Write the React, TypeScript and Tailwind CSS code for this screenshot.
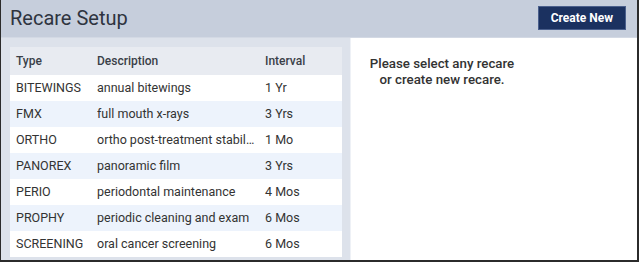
import React from 'react';

const RECARES = [
  { type: 'BITEWINGS', description: 'annual bitewings', interval: '1 Yr' },
  { type: 'FMX', description: 'full mouth x-rays', interval: '3 Yrs' },
  { type: 'ORTHO', description: 'ortho post-treatment stabilization', interval: '1 Mo' },
  { type: 'PANOREX', description: 'panoramic film', interval: '3 Yrs' },
  { type: 'PERIO', description: 'periodontal maintenance', interval: '4 Mos' },
  { type: 'PROPHY', description: 'periodic cleaning and exam', interval: '6 Mos' },
  { type: 'SCREENING', description: 'oral cancer screening', interval: '6 Mos' },
];

export default function App() {
  return (
    <div className="w-[639px] h-[262px] bg-[#2b2b2b] pl-px pr-[2px] pb-[2px] font-['Roboto',sans-serif] text-[#333]">
      <div className="flex flex-col h-full bg-white overflow-hidden">
        {/* Header */}
        <div className="flex items-center justify-between h-[38px] bg-[#c6cedc] border-b border-[#d3d9e4] pl-[9px] pr-[11px]">
          <h1 className="text-[20px] leading-none text-[#2e3440] font-normal pb-[2px]">Recare Setup</h1>
          <button className="h-[24px] px-[12px] bg-[#1b3160] border border-[#4a5f8c] text-white text-[12px] font-bold mb-[2px]">
            Create New
          </button>
        </div>

        <div className="flex flex-1 min-h-0">
          {/* List */}
          <div className="w-[350px] bg-[#dde2eb] pl-[9px] pt-[9px] pr-[9px] border-r border-[#eef1f6]">
            <table className="w-[332px] table-fixed border-collapse text-[12.5px]">
              <thead>
                <tr className="h-[28px] bg-[#e8ebf1] text-left">
                  <th className="w-[81px] pl-[6px] font-medium text-[12px] text-[#3a3f48]">Type</th>
                  <th className="w-[168px] pl-[6px] font-medium text-[12px] text-[#3a3f48]">Description</th>
                  <th className="pl-[6px] font-medium text-[12px] text-[#3a3f48]">Interval</th>
                </tr>
              </thead>
              <tbody>
                {RECARES.map((r, i) => (
                  <tr key={r.type} className={`h-[26px] ${i % 2 === 1 ? 'bg-[#edf3fc]' : 'bg-white'}`}>
                    <td className="pl-[6px] whitespace-nowrap">{r.type}</td>
                    <td className="pl-[6px] pr-[2px]">
                      <div className="max-w-[160px] whitespace-nowrap overflow-hidden text-ellipsis">{r.description}</div>
                    </td>
                    <td className="pl-[6px] whitespace-nowrap">{r.interval}</td>
                  </tr>
                ))}
              </tbody>
            </table>
          </div>

          {/* Detail */}
          <div className="flex-1 bg-white pl-[16px] pt-[18px]">
            <p className="w-[150px] text-center text-[13.3px] font-medium leading-[16px] text-[#333]">
              Please select any recare or create new recare.
            </p>
          </div>
        </div>
      </div>
    </div>
  );
}
